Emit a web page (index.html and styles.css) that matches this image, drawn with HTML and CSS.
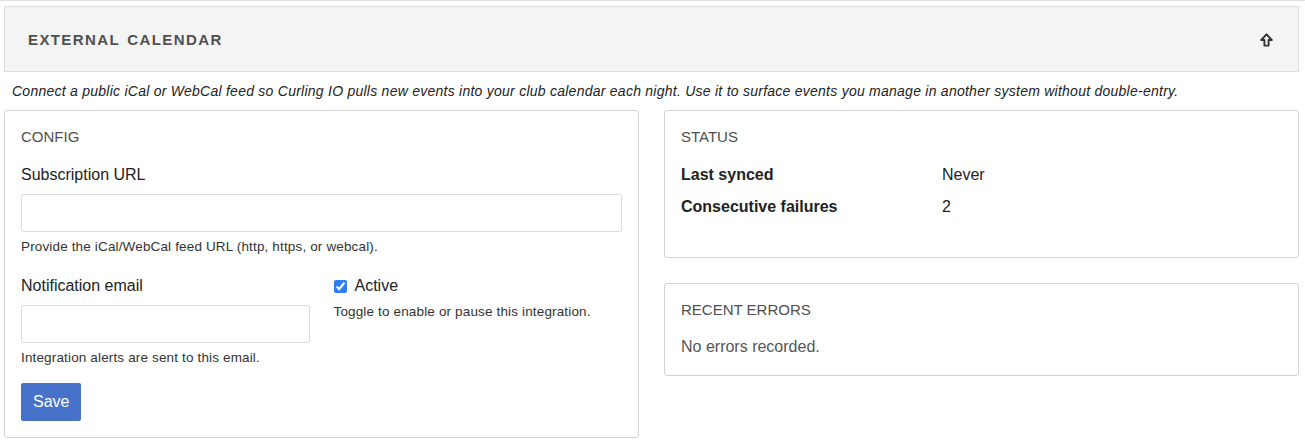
FILE: index.html
```html
<!DOCTYPE html>
<html lang="en">
<head>
<meta charset="utf-8">
<title>External Calendar</title>
<link rel="stylesheet" href="styles.css">
</head>
<body>
<div class="topline"></div>
<div class="page">
  <header class="panel-head">
    <h2 class="panel-title">EXTERNAL CALENDAR</h2>
    <span class="collapse-icon" aria-label="Collapse">
      <svg width="13" height="14" viewBox="0 0 13 14"><path d="M6.5 1.3 L11.8 7 H8.6 V12.6 H4.4 V7 H1.2 Z" fill="none" stroke="#333" stroke-width="1.9" stroke-linejoin="round"/></svg>
    </span>
  </header>
  <p class="desc">Connect a public iCal or WebCal feed so Curling IO pulls new events into your club calendar each night. Use it to surface events you manage in another system without double-entry.</p>
  <div class="columns">
    <div class="card">
      <h3 class="card-title">CONFIG</h3>
      <div class="field">
        <label class="label">Subscription URL</label>
        <input class="input" type="text">
        <p class="help">Provide the iCal/WebCal feed URL (http, https, or webcal).</p>
      </div>
      <div class="row2">
        <div class="field">
          <label class="label">Notification email</label>
          <input class="input" type="text">
          <p class="help">Integration alerts are sent to this email.</p>
        </div>
        <div class="field">
          <label class="check"><input type="checkbox" checked> <span>Active</span></label>
          <p class="help help-check">Toggle to enable or pause this integration.</p>
        </div>
      </div>
      <button class="btn">Save</button>
    </div>
    <div class="side">
      <div class="card status">
        <h3 class="card-title">STATUS</h3>
        <div class="kv">
          <div class="k">Last synced</div><div class="v">Never</div>
          <div class="k">Consecutive failures</div><div class="v">2</div>
        </div>
      </div>
      <div class="card">
        <h3 class="card-title">RECENT ERRORS</h3>
        <p class="muted">No errors recorded.</p>
      </div>
    </div>
  </div>
</div>
</body>
</html>
```
FILE: styles.css
```css
* { box-sizing: border-box; }
html, body { margin: 0; padding: 0; background: #fff; }
body { font-family: "Liberation Sans", Arial, Helvetica, sans-serif; color: #222; }

.topline { height: 1px; background: #e2e2e2; }

.page { padding: 5px 6px 0 4px; }

.panel-head {
  height: 66px;
  background: #f4f4f4;
  border: 1px solid #dedede;
  display: flex;
  align-items: center;
  justify-content: space-between;
  padding: 0 25px 0 23px;
}
.panel-title {
  margin: 0;
  font-size: 15px;
  font-weight: bold;
  letter-spacing: 1.4px;
  word-spacing: 2px;
  color: #505050;
}
.collapse-icon { display: flex; width: 13px; height: 14px; margin-top: 1px; }

.desc {
  margin: 10px 0 0;
  padding-left: 8px;
  font-size: 14px;
  letter-spacing: 0.25px;
  line-height: 18px;
  font-style: italic;
  color: #222;
}

.columns {
  margin-top: 10px;
  display: grid;
  grid-template-columns: 1fr 1fr;
  gap: 25px;
  align-items: start;
}
.side { display: flex; flex-direction: column; gap: 25px; }

.card {
  border: 1px solid #d2d2d2;
  border-radius: 3px;
  padding: 16px;
  background: #fff;
}
.card-title {
  margin: 0;
  font-size: 15px;
  line-height: 20px;
  font-weight: normal;
  color: #4f4f4f;
}

.field { margin-top: 16px; }
.label {
  display: block;
  font-size: 16px;
  line-height: 24px;
  color: #222;
  margin-bottom: 7px;
}
.input {
  display: block;
  width: 100%;
  height: 38px;
  border: 1px solid #dcdcdc;
  border-radius: 2px;
  background: #fff;
  font: inherit;
  padding: 0 8px;
  margin: 0;
}
.help {
  margin: 6px 0 0;
  font-size: 13.5px;
  letter-spacing: 0.15px;
  line-height: 18px;
  color: #333;
}
.row2 {
  display: grid;
  grid-template-columns: 1fr 1fr;
  gap: 24px;
  margin-top: 18px;
}
.row2 .field { margin-top: 0; }
.check {
  display: flex;
  align-items: center;
  gap: 8px;
  font-size: 16px;
  line-height: 24px;
  color: #222;
}
.check input {
  margin: 0;
  width: 13px;
  height: 13px;
  accent-color: #2f7cf6;
}
.help-check { margin-top: 5px; }

.btn {
  margin-top: 16px;
  height: 38px;
  padding: 0 12px;
  border: none;
  border-radius: 2px;
  background: #4672c9;
  color: #fff;
  font: inherit;
  font-size: 16px;
}

.kv {
  display: grid;
  grid-template-columns: 261px 1fr;
  row-gap: 8px;
  margin-top: 16px;
  margin-bottom: 22px;
  font-size: 16px;
  line-height: 24px;
}
.k { font-weight: bold; color: #222; }
.v { color: #222; }

.muted {
  margin: 15px 0 0;
  font-size: 16px;
  line-height: 24px;
  color: #555;
}
```
